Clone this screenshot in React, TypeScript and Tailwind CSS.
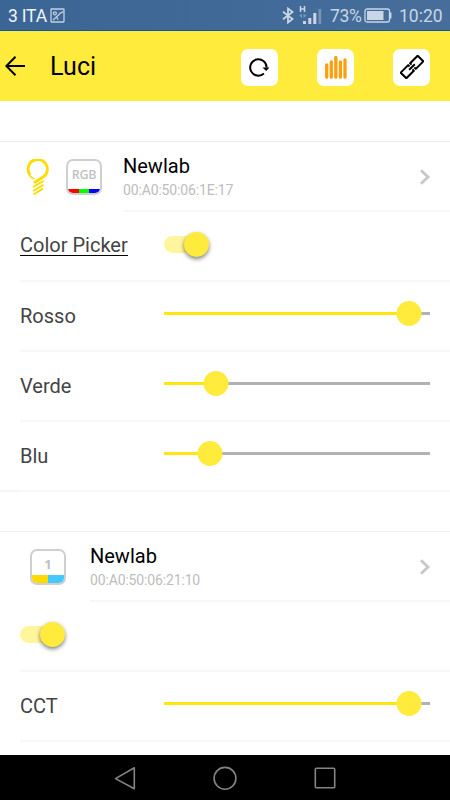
import type { ReactNode } from 'react'

interface SliderRowProps {
  label: string
  value: number
}

function StatusBar() {
  return (
    <div className="flex h-[31px] shrink-0 justify-between border-b border-[#0d5aa0] bg-gradient-to-r from-[#3b6594] to-[#476e9b] px-2">
      <div className="flex items-center gap-[3px] pt-[3px] text-[#f1f5fa]">
        <span className="w-[39px] whitespace-nowrap text-[17.5px] leading-none tracking-[-0.2px]">3 ITA</span>
        <svg className="mb-[2px] h-[15px] w-[15px]" viewBox="0 0 15 15" fill="none" stroke="#c3d0df" strokeWidth="1.3">
          <rect x="1" y="1" width="13" height="13" rx="0.5" />
          <circle cx="4.9" cy="5.3" r="1.5" />
          <path d="M3 12.2 6.3 8.9 8.4 7.4 10 5.3 13.5 3.6M6.3 8.9 8.2 11.5" />
        </svg>
      </div>
      <div className="flex items-center text-[#c8d6e6]">
        <svg className="h-[17px] w-[12px]" viewBox="0 0 12 17" fill="none" stroke="currentColor" strokeWidth="1.8">
          <path d="M1 4.7 10.5 12 6 15.5V1.5L10.5 5 1 12.3" />
        </svg>
        <svg className="ml-[5px] h-[20px] w-[23px]" viewBox="0 0 23 20">
          <path d="M1.5 1v6M5.5 1v6M1.5 4h4" stroke="currentColor" strokeWidth="1.5" fill="none" />
          <path d="m3 8.5-3 2.2 3 2.2zM4.5 8.5l3 2.2-3 2.2z" fill="#7895b5" />
          <path d="M4 16h3v3H4zM9.3 13h3v6h-3zM14.3 8h3v11h-3z" fill="currentColor" />
          <path d="M19.5 4h2.7v15h-2.7z" fill="#7895b5" />
        </svg>
        <span className="ml-[8px] w-[33px] whitespace-nowrap pt-[3px] text-[17.5px] leading-none tracking-[-0.3px]">73%</span>
        <svg className="ml-[1px] mt-px h-[15px] w-[28px]" viewBox="0 0 28 15">
          <rect x="1" y="1" width="24.5" height="13" rx="2" fill="none" stroke="currentColor" strokeWidth="1.3" />
          <path d="M3 3h16.5v9H3z" fill="currentColor" />
          <path d="M26.7 4.5v6" stroke="currentColor" strokeWidth="1.5" />
        </svg>
        <span className="ml-[7px] w-[43px] whitespace-nowrap pt-[3px] text-[17.5px] leading-none">10:20</span>
      </div>
    </div>
  )
}

function HeaderButton({ children }: { children: ReactNode }) {
  return (
    <button className="flex h-[37px] w-[37px] items-center justify-center rounded-[7px] bg-white">
      {children}
    </button>
  )
}

function Header() {
  return (
    <div className="flex h-[70px] shrink-0 items-center bg-[#ffeb3b] pl-[5px] pr-5">
      <svg className="h-5 w-5" viewBox="0 0 20 20" fill="none" stroke="#000" strokeWidth="2">
        <path d="M20 10H1.5M10.5 0.8 1.3 10l9.2 9.2" />
      </svg>
      <h1 className="ml-[25px] mt-px text-[25px] leading-none tracking-[0.1px] text-black">Luci</h1>
      <div className="ml-auto flex gap-[39px] pt-[2px]">
        <HeaderButton>
          <svg className="h-[21px] w-[21px]" viewBox="0 0 21 21">
            <path d="M17.6 10.5A8.2 8.2 0 1 0 14.9 16.6" fill="none" stroke="#000" strokeWidth="2" />
            <path d="M13.5 10.5h7L17.2 14z" fill="#000" />
          </svg>
        </HeaderButton>
        <HeaderButton>
          <svg className="h-[24px] w-[24px]" viewBox="0 0 24 24" stroke="#ff9f0d" strokeWidth="3.3" strokeLinecap="round">
            <path d="M2.7 10v12.2M7.3 7v15.2M11.8 2.5v19.7M16.4 7v15.2M21 5v17.2" />
          </svg>
        </HeaderButton>
        <HeaderButton>
          <svg className="h-[24px] w-[24px]" viewBox="0 0 24 24" fill="none" stroke="#000" strokeWidth="2" strokeLinejoin="round">
            <g transform="rotate(-45 12 12)">
              <path d="M10.6 10V8H0v8h10.600v-2" />
              <path d="M13.4 10V8H24v8H13.400v-2" />
              <path d="M8 12h8" />
            </g>
          </svg>
        </HeaderButton>
      </div>
    </div>
  )
}

function BulbIcon() {
  return (
    <svg className="h-[37px] w-[24px]" viewBox="0 0 24 37" fill="none" stroke="#ffdc00">
      <path d="M4.2 16A9.6 9.6 0 1 1 17.5 17.8L8 23.8" strokeWidth="2.8" />
      <path d="M2 11c0 4.5 2.5 7.8 6.5 9" strokeWidth="1.5" />
      <path d="M7 28 17.5 21.8M7 32l10.500-6.200M7.500 35.500l9.500-5.800" strokeWidth="2" />
    </svg>
  )
}

function RgbIcon() {
  return (
    <div className="flex h-9 w-9 flex-col overflow-hidden rounded-[7px] border-2 border-[#cfcfcf] bg-white">
      <span className="flex flex-1 items-center justify-center pt-px font-['Open_Sans'] text-[12.5px] font-semibold leading-none tracking-[-0.2px] text-[#c2c2c2]">RGB</span>
      <div className="flex h-1">
        <span className="flex-1 bg-[#ff0000]" />
        <span className="flex-1 bg-[#00ff00]" />
        <span className="flex-1 bg-[#0000ff]" />
      </div>
    </div>
  )
}

function CctIcon() {
  return (
    <div className="flex h-9 w-9 flex-col overflow-hidden rounded-[7px] border-2 border-[#cfcfcf] bg-white">
      <span className="flex flex-1 items-center justify-center pt-[3px] font-['Open_Sans'] text-[13px] font-bold leading-none text-[#c0c0c0]">1</span>
      <div className="flex h-2">
        <span className="flex-1 bg-[#ffd900]" />
        <span className="flex-1 bg-[#45c8ff]" />
      </div>
    </div>
  )
}

function DeviceRow({ name, address, children }: { name: string; address: string; children: ReactNode }) {
  return (
    <div className="flex h-[71px] border-t border-[#ededed]">
      <div className="flex shrink-0 items-start pt-[17px]">{children}</div>
      <div className="flex flex-1 items-center justify-between border-b-2 border-[#f7f7f7] pr-5">
        <div className="pt-[3px]">
          <div className="text-[20px] leading-6 text-black">{name}</div>
          <div className="text-[14px] leading-[24px] tracking-[-0.15px] text-[#bdbdbd]">{address}</div>
        </div>
        <svg className="mt-px h-4 w-[10px]" viewBox="0 0 10 16" fill="none" stroke="#c7c7cc" strokeWidth="2.9">
          <path d="M1 1.2 8 8 1 14.8" />
        </svg>
      </div>
    </div>
  )
}

function Toggle() {
  return (
    <div className="relative mb-[3px] h-[17px] w-[42px] rounded-full bg-[#fff59d]">
      <span className="absolute -top-1 left-5 h-[25px] w-[25px] rounded-full bg-[#ffeb3b] shadow-[0_2px_4px_rgba(0,0,0,0.5)]" />
    </div>
  )
}

function SliderRow({ label, value }: SliderRowProps) {
  return (
    <div className="ml-5 flex h-[70px] items-center border-b-2 border-[#f7f7f7] pr-5">
      <span className="mb-px w-36 text-[20px] leading-none text-[#444]">{label}</span>
      <div className="relative mb-[5px] h-[3px] flex-1 bg-[#b2b2b2]">
        <div className="h-full bg-[#ffe60f]" style={{ width: `${value}%` }} />
        <span
          className="absolute -top-[11px] h-[25px] w-[25px] -translate-x-1/2 rounded-full bg-[#ffeb3b]"
          style={{ left: `${value}%` }}
        />
      </div>
    </div>
  )
}

function NavBar() {
  return (
    <div className="flex h-[45px] shrink-0 items-center justify-center gap-[76px] bg-black">
      <svg className="h-6 w-6" viewBox="0 0 24 24" fill="none" stroke="#848484" strokeWidth="1.6" strokeLinejoin="round">
        <path d="M21.3 1.8v21L2.5 12.6z" />
      </svg>
      <svg className="h-6 w-6" viewBox="0 0 24 24" fill="none" stroke="#848484" strokeWidth="1.6">
        <circle cx="12" cy="12.3" r="10.9" />
      </svg>
      <svg className="h-6 w-6" viewBox="0 0 24 24" fill="none" stroke="#848484" strokeWidth="1.6">
        <rect x="2.3" y="2.3" width="19.4" height="19.4" rx="1" />
      </svg>
    </div>
  )
}

const COLORS: SliderRowProps[] = [
  { label: 'Rosso', value: 92 },
  { label: 'Verde', value: 19.7 },
  { label: 'Blu', value: 17.3 },
]

export default function App() {
  return (
    <div className="flex h-[800px] w-[450px] flex-col overflow-hidden bg-white font-['Roboto',sans-serif]">
      <StatusBar />
      <Header />

      <div className="flex min-h-0 flex-1 flex-col gap-[39px] overflow-hidden pt-10">
        <section className="shrink-0 border-b-2 border-[#f5f5f5]">
          <DeviceRow name="Newlab" address="00:A0:50:06:1E:17">
            <div className="flex w-[123px] gap-4 pl-[26px]">
              <BulbIcon />
              <RgbIcon />
            </div>
          </DeviceRow>
          <div className="ml-5 flex h-[70px] items-center border-b-2 border-[#f7f7f7]">
            <span className="flex w-36">
              <span className="border-b border-black text-[20px] leading-[19px] text-[#444]">Color Picker</span>
            </span>
            <Toggle />
          </div>
          <div className="-mb-0.5">
            {COLORS.map((c) => (
              <SliderRow key={c.label} label={c.label} value={c.value} />
            ))}
          </div>
        </section>

        <section className="shrink-0">
          <DeviceRow name="Newlab" address="00:A0:50:06:21:10">
            <div className="w-[90px] pl-[30px]">
              <CctIcon />
            </div>
          </DeviceRow>
          <div className="ml-5 flex h-[70px] items-center border-b-2 border-[#f7f7f7]">
            <Toggle />
          </div>
          <SliderRow label="CCT" value={92} />
        </section>
      </div>

      <NavBar />
    </div>
  )
}
